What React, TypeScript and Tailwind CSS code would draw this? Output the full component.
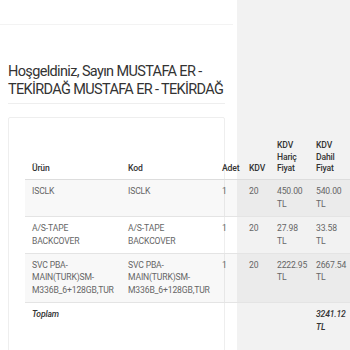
import React from "react";

type Row = {
  urun: string[];
  kod: string[];
  adet: string;
  kdv: string;
  haric: string;
  dahil: string;
};

const rows: Row[] = [
  { urun: ["ISCLK"], kod: ["ISCLK"], adet: "1", kdv: "20", haric: "450.00", dahil: "540.00" },
  {
    urun: ["A/S-TAPE", "BACKCOVER"],
    kod: ["A/S-TAPE", "BACKCOVER"],
    adet: "1",
    kdv: "20",
    haric: "27.98",
    dahil: "33.58",
  },
  {
    urun: ["SVC PBA-", "MAIN(TURK)SM-", "M336B_6+128GB,TUR"],
    kod: ["SVC PBA-", "MAIN(TURK)SM-", "M336B_6+128GB,TUR"],
    adet: "1",
    kdv: "20",
    haric: "2222.95",
    dahil: "2667.54",
  },
];

function Lines({ items }: { items: string[] }) {
  return (
    <>
      {items.map((t, i) => (
        <span key={i} className="block whitespace-nowrap">
          {t}
        </span>
      ))}
    </>
  );
}

const th =
  "pl-[7px] pr-px pt-[9px] pb-[4px] leading-[11.7px] align-bottom text-left font-medium text-[#333]";
const td = "pl-[7px] pr-px py-[5px] align-top";

export default function App() {
  return (
    <div className="min-h-screen bg-[#f2f2f2] font-['Roboto',sans-serif] overflow-hidden">
      <div className="w-[237px] min-h-screen bg-white">
        <div className="h-[25px] mr-[4px] border-b border-[#f3f3f3]" />

        <div className="ml-[8px] mr-[12px] mt-[38px]">
          <h1 className="text-[14.5px] leading-[18px] tracking-[-0.65px] text-[#333] pb-[4px] border-b border-[#eeeeee]">
            Hoşgeldiniz, Sayın MUSTAFA ER - TEKİRDAĞ MUSTAFA ER - TEKİRDAĞ
          </h1>

          <div className="mt-[13px] border border-[#eeeeee] rounded-[2px] pl-[16px] pt-[13px] pb-[20px] min-h-[240px]">
            <table className="table-fixed w-[335px] border-collapse text-[8.6px] tracking-[-0.15px] leading-[12.86px] text-[#666]">
              <colgroup>
                <col className="w-[96px]" />
                <col className="w-[94px]" />
                <col className="w-[27px]" />
                <col className="w-[28px]" />
                <col className="w-[39px]" />
                <col className="w-[51px]" />
              </colgroup>
              <thead>
                <tr className="border-b border-[#dddddd]">
                  <th className={th}>Ürün</th>
                  <th className={th}>Kod</th>
                  <th className={th}>Adet</th>
                  <th className={th}>KDV</th>
                  <th className={th}>
                    KDV
                    <br />
                    Hariç
                    <br />
                    Fiyat
                  </th>
                  <th className={th}>
                    KDV
                    <br />
                    Dahil
                    <br />
                    Fiyat
                  </th>
                </tr>
              </thead>
              <tbody>
                {rows.map((r, i) => (
                  <tr
                    key={i}
                    className={
                      i % 2 === 0
                        ? "border-t border-[#e4e4e4] bg-black/[0.028]"
                        : "border-t border-[#e4e4e4]"
                    }
                  >
                    <td className={td}>
                      <Lines items={r.urun} />
                    </td>
                    <td className={td}>
                      <Lines items={r.kod} />
                    </td>
                    <td className={td}>{r.adet}</td>
                    <td className={td}>{r.kdv}</td>
                    <td className={td}>
                      <span className="block whitespace-nowrap">{r.haric}</span>
                      <span className="block">TL</span>
                    </td>
                    <td className={td}>
                      <span className="block whitespace-nowrap">{r.dahil}</span>
                      <span className="block">TL</span>
                    </td>
                  </tr>
                ))}
              </tbody>
              <tfoot>
                <tr className="border-t border-[#e4e4e4] italic font-medium text-[#333]">
                  <td className={td}>Toplam</td>
                  <td className={td} />
                  <td className={td} />
                  <td className={td} />
                  <td className={td} />
                  <td className={td}>
                    <span className="block whitespace-nowrap">3241.12</span>
                    <span className="block">TL</span>
                  </td>
                </tr>
              </tfoot>
            </table>
          </div>
        </div>
      </div>
    </div>
  );
}
